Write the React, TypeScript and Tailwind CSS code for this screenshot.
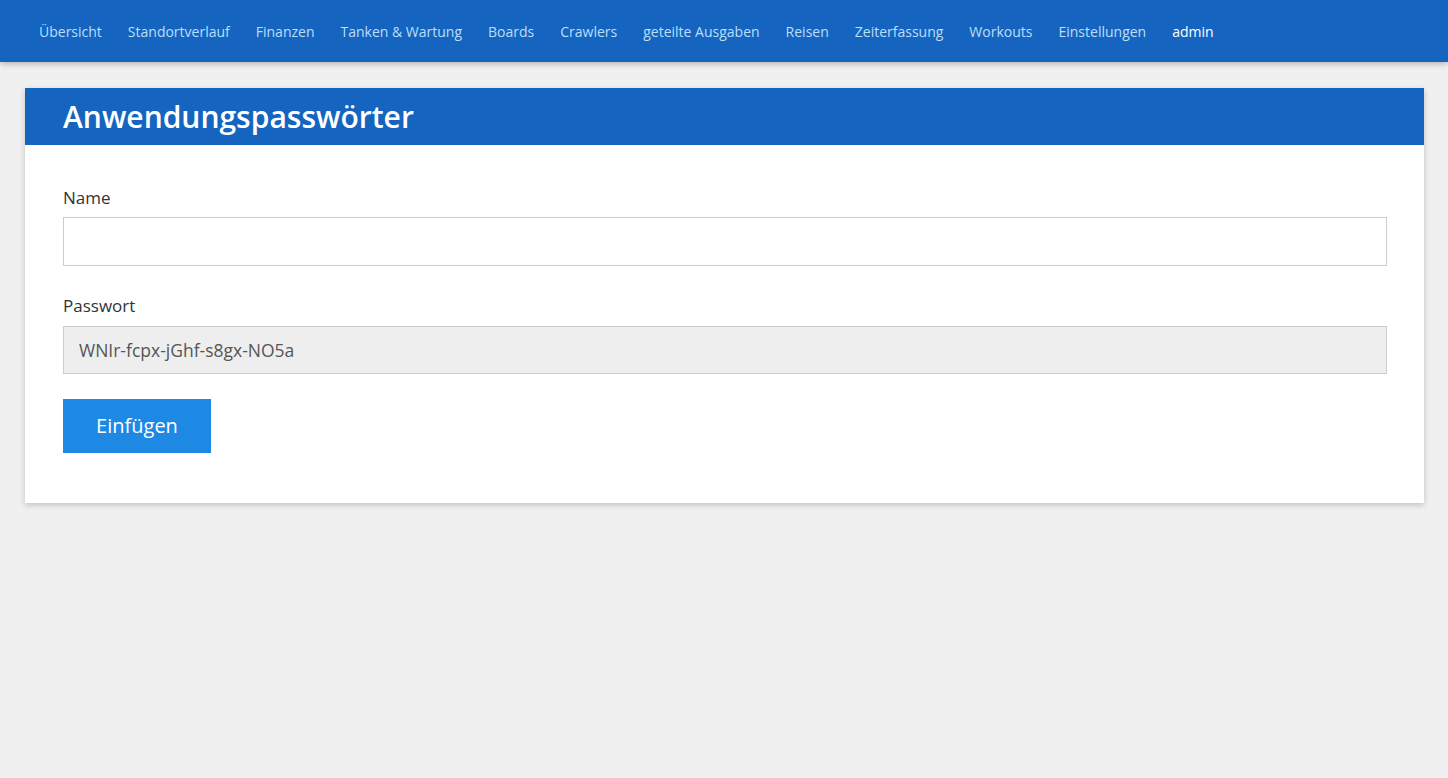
import React from "react";

const NAV_ITEMS = [
  "Übersicht",
  "Standortverlauf",
  "Finanzen",
  "Tanken & Wartung",
  "Boards",
  "Crawlers",
  "geteilte Ausgaben",
  "Reisen",
  "Zeiterfassung",
  "Workouts",
  "Einstellungen",
];

const App: React.FC = () => {
  return (
    <div
      className="min-h-screen bg-[#f0f0f0]"
      style={{ fontFamily: '"Open Sans", "Noto Sans", sans-serif' }}
    >
      {/* top navigation */}
      <nav className="relative z-10 h-[62px] bg-[#1565c0] shadow-[0_2px_6px_rgba(0,0,0,0.25)] flex items-center pl-[39px] gap-[26px] text-[14px]">
        {NAV_ITEMS.map((item) => (
          <a key={item} className="text-[#bbdefb] whitespace-nowrap cursor-pointer">
            {item}
          </a>
        ))}
        <a className="text-white font-medium whitespace-nowrap cursor-pointer">admin</a>
      </nav>

      <main className="pl-[25px] pr-[24px] pt-[26px]">
        <div className="bg-white shadow-[0_2px_6px_rgba(0,0,0,0.2)]">
          <div className="h-[57px] bg-[#1565c0] flex items-center px-[38px]">
            <h1 className="text-white text-[30px] font-semibold leading-none">
              Anwendungspasswörter
            </h1>
          </div>

          <form
            className="pl-[38px] pr-[37px] pt-[41px] pb-[50px]"
            onSubmit={(e) => e.preventDefault()}
          >
            <label className="block text-[17px] leading-[24px] text-[#333] mb-[7px]">Name</label>
            <input
              type="text"
              className="block w-full h-[49px] border border-[#cccccc] bg-white px-[15px] text-[17.5px] outline-none"
            />

            <label className="block text-[17px] leading-[24px] text-[#333] mt-[28px] mb-[8px]">
              Passwort
            </label>
            <input
              type="text"
              readOnly
              value="WNIr-fcpx-jGhf-s8gx-NO5a"
              className="block w-full h-[48px] border border-[#cccccc] bg-[#eeeeee] px-[15px] text-[17.5px] text-[#555] outline-none"
            />

            <button
              type="submit"
              className="mt-[25px] h-[54px] w-[148px] bg-[#1e88e5] text-white text-[20px]"
            >
              Einfügen
            </button>
          </form>
        </div>
      </main>
    </div>
  );
};

export default App;
